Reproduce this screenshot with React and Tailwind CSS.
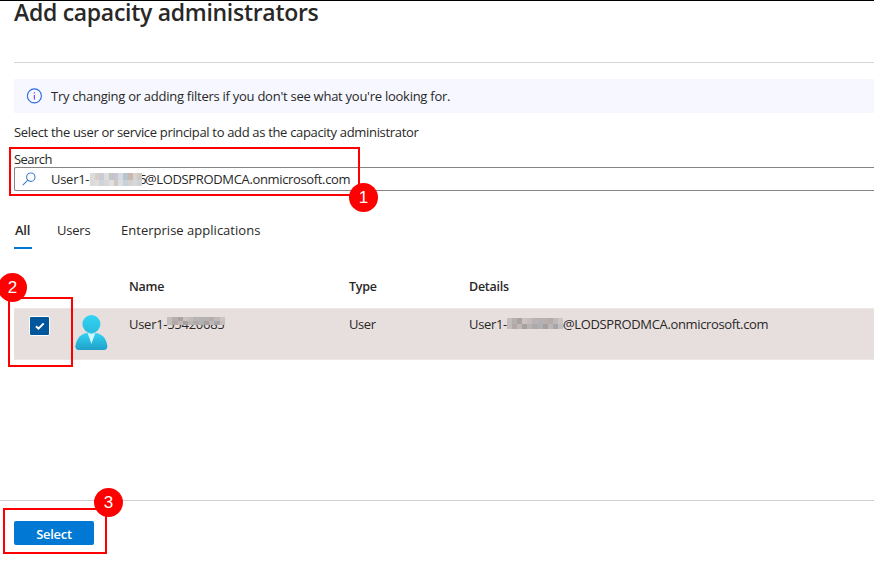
const SEARCH_TILES = ['#dcdcdc', '#d9cfc6', '#c9ccd6', '#dddddd', '#c3c6c4', '#c9c5d3', '#d3dce2', '#b9c3cc', '#c9b8ae', '#d5d5d8', '#d3c8c0', '#dadada', '#e4dcd6', '#ccd4de', '#d9d6d3', '#e0e0e0', '#cfc9c4', '#dcdde2', '#c8d0d8', '#d6d2ce', '#d8d8dc', '#cfd3d6'];
const ROW_TILES = ['#c4bdbb', '#b5afb0', '#aaa2a3', '#cbc3c0', '#c3bcb9', '#bab3b3', '#b3b1b3', '#b8b0ae', '#b2acaa', '#bfb9b8', '#cdc5c3', '#c4bcba', '#b3a7a8', '#bfb8b5', '#a6a09f', '#b8b4b2', '#b0a9aa', '#aeb0b5', '#a79f9d', '#bdb6b4', '#a5a6ab', '#c4bebc'];

function Redaction({ tiles, className }) {
  return (
    <span className={`absolute grid grid-cols-11 ${className}`}>
      {tiles.map((c, i) => (
        <span key={i} style={{ backgroundColor: c }} />
      ))}
    </span>
  );
}

function Marker({ n, className }) {
  return (
    <div className={`absolute flex size-[29px] items-center justify-center rounded-full bg-[#fe0000] pb-px font-['Liberation_Sans',sans-serif] text-[17px] leading-none text-white ${className}`}>
      {n}
    </div>
  );
}

function InfoIcon() {
  return (
    <svg className="size-4 shrink-0" viewBox="0 0 16 16" fill="none" stroke="#2b6be0">
      <circle cx="8.400" cy="7.900" r="7" strokeWidth="1.1" />
      <path d="M8.400 7v4.400" stroke="#7a4cf0" strokeWidth="1.2" />
      <path d="M8.400 4.300v1.300" stroke="#7a4cf0" strokeWidth="1.3" />
    </svg>
  );
}

function SearchIcon() {
  return (
    <svg className="size-[14px] shrink-0" viewBox="0 0 14 14" fill="none" stroke="#3f7fce" strokeWidth="1.1">
      <circle cx="8.8" cy="5.2" r="4.2" />
      <path d="M5.8 8.2.8 13.2" />
    </svg>
  );
}

function PersonIcon() {
  return (
    <svg className="h-[36px] w-[33px]" viewBox="0 0 33 36">
      <defs>
        <linearGradient id="body" x1="0" y1="0" x2="0" y2="1">
          <stop offset="0" stopColor="#32d4f5" />
          <stop offset="1" stopColor="#219fc8" />
        </linearGradient>
        <linearGradient id="head" x1="0" y1="0" x2="0" y2="1">
          <stop offset="0" stopColor="#32d4f5" />
          <stop offset="1" stopColor="#28bbdf" />
        </linearGradient>
      </defs>
      <g transform="translate(.4 0)">
        <path d="M28.7 36c1.9 0 3.3-1.5 3.3-3.4v-.5C30.8 24 26.500 18.500 16 18.500S1.400 24 0 32.200c-.2 1.900 1.200 3.600 3.100 3.800z" fill="url(#body)" />
        <path d="M12.100 18.800 16 29.900l4-11.100a9 9 0 0 1-7.900 0" fill="#d5f6fd" />
        <circle cx="16" cy="10.100" r="9" fill="url(#head)" />
      </g>
    </svg>
  );
}

export default function App() {
  return (
    <div className="relative flex h-[565px] w-[874px] flex-col border-t border-black bg-white font-['Open_Sans','Noto_Sans',sans-serif] text-[13px] leading-5 text-[#292827]">
      <main className="flex h-[499px] flex-col pl-[14px]">
        <header className="h-[62px] shrink-0 border-b border-[#d6d6d6]">
          <h1 className="text-[23px] leading-[22px] font-semibold tracking-[-0.29px] whitespace-nowrap">Add capacity administrators</h1>
        </header>

        <div className="mt-4 flex h-[34px] shrink-0 items-center gap-[9px] bg-[#f6f7ff] pl-3">
          <InfoIcon />
          <span className="whitespace-nowrap tracking-[-0.26px]">Try changing or adding filters if you don't see what you're looking for.</span>
        </div>

        <p className="mt-[9px] tracking-[-0.33px] whitespace-nowrap">Select the user or service principal to add as the capacity administrator</p>

        <label className="mt-[7px] h-[18px] tracking-[-0.55px]">Search</label>
        <div className="flex h-6 shrink-0 items-center rounded-l-[2px] border border-r-0 border-[#878583] pl-[7px]">
          <SearchIcon />
          <span className="relative ml-[15px] whitespace-nowrap">
            <span className="inline-block w-[94px] tracking-[-0.28px]">User1-55420685</span>
            <span className="tracking-[-0.35px]">@LODSPRODMCA.onmicrosoft.com</span>
            <Redaction tiles={SEARCH_TILES} className="top-[4px] left-[39px] h-[13px] w-[52px]" />
          </span>
        </div>

        <nav className="mt-[29px] flex h-[29px] shrink-0 whitespace-nowrap">
          <span className="w-[18px] border-b-2 border-[#0078d4] pl-px font-semibold tracking-[-0.28px]">All</span>
          <span className="ml-[25px] w-[64px] tracking-[-0.2px]">Users</span>
          <span className="tracking-[0.02px]">Enterprise applications</span>
        </nav>

        <div className="mt-[28px] grid h-[31px] shrink-0 grid-cols-[115px_220px_120px_1fr] text-[12.5px] font-semibold tracking-[-0.25px]">
          <span />
          <span>Name</span>
          <span>Type</span>
          <span>Details</span>
        </div>
        <div className="grid h-[52px] shrink-0 grid-cols-[61px_54px_220px_120px_1fr] border-y border-[#ece7e6] bg-[#e7dfde] pt-[5px] tracking-[-0.28px]">
          <span className="mt-[2px] ml-[15px] flex h-[20px] w-[21px] items-center justify-center rounded-[2px] border border-white bg-[#00579c]">
            <svg className="size-[12px]" viewBox="0 0 12 12" fill="none" stroke="white" strokeWidth="2">
              <path d="m2 6.200 2.500 2.500L9.700 3.400" />
            </svg>
          </span>
          <PersonIcon />
          <span className="relative">
            User1-55420685
            <Redaction tiles={ROW_TILES} className="top-[3px] left-[38px] h-[8px] w-[58px]" />
          </span>
          <span className="tracking-[-0.4px]">User</span>
          <span className="relative whitespace-nowrap tracking-[-0.35px]">
            <span className="inline-block w-[94px]">User1-55420685</span>@LODSPRODMCA.onmicrosoft.com
            <Redaction tiles={ROW_TILES} className="top-[4px] left-[38px] h-[11px] w-[56px]" />
          </span>
        </div>
      </main>

      <footer className="flex-1 border-t border-[#cfcfcf] pt-5 pl-[14px]">
        <button className="flex h-6 w-20 items-center justify-center rounded-[2px] bg-[#0078d4] pt-[2px] font-semibold tracking-[-0.28px] text-white">Select</button>
      </footer>

      <div className="absolute top-[146px] left-[9px] h-[49px] w-[351px] border-2 border-[#fe0000]" />
      <Marker n="1" className="top-[182px] left-[349px]" />
      <div className="absolute top-[296px] left-[8px] h-[70px] w-[65px] border-2 border-[#fe0000]" />
      <Marker n="2" className="top-[272px] left-[-2px]" />
      <div className="absolute top-[507px] left-[3px] h-[46px] w-[104px] border-2 border-[#fe0000]" />
      <Marker n="3" className="top-[487px] left-[94px]" />
    </div>
  );
}
